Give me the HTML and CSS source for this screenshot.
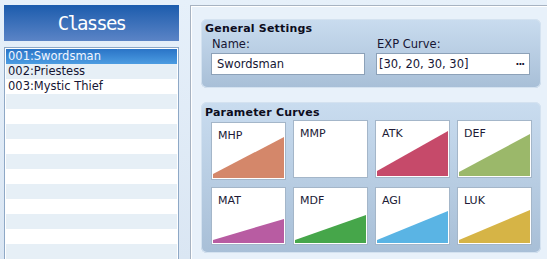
FILE: index.html
```
<!DOCTYPE html>
<html lang="en">

<head>
    <meta charset="UTF-8">
    <meta name="viewport" content="width=device-width, initial-scale=1.0">
    <title>Classes</title>
    <link rel="stylesheet" href="styles.css">
</head>

<body>
    <div class="sidebar">
        <h1 class="sidebar-title">Classes</h1>
        <ul class="class-list">
            <li class="selected">001:Swordsman</li>
            <li>002:Priestess</li>
            <li>003:Mystic Thief</li>
            <li></li>
            <li></li>
            <li></li>
            <li></li>
            <li></li>
            <li></li>
            <li></li>
            <li></li>
            <li></li>
            <li></li>
            <li></li>
        </ul>
    </div>

    <div class="editor">
        <div class="group general">
            <h2>General Settings</h2>
            <div class="fields">
                <div class="field">
                    <label for="name">Name:</label>
                    <div class="input" id="name">Swordsman</div>
                </div>
                <div class="field">
                    <label for="exp">EXP Curve:</label>
                    <div class="input" id="exp">[30, 20, 30, 30]<span class="more">...</span></div>
                </div>
            </div>
        </div>

        <div class="group params">
            <h2>Parameter Curves</h2>
            <div class="curves">
                <div class="curve pressed">
                    <span>MHP</span>
                    <svg viewBox="0 0 71 54" preserveAspectRatio="none"><polygon points="0,50 71,13 71,54 0,54" fill="#d4876a"/></svg>
                </div>
                <div class="curve">
                    <span>MMP</span>
                    <svg viewBox="0 0 71 54" preserveAspectRatio="none"></svg>
                </div>
                <div class="curve">
                    <span>ATK</span>
                    <svg viewBox="0 0 71 54" preserveAspectRatio="none"><polygon points="0,49 71,9 71,54 0,54" fill="#c64a6a"/></svg>
                </div>
                <div class="curve">
                    <span>DEF</span>
                    <svg viewBox="0 0 71 54" preserveAspectRatio="none"><polygon points="0,50 71,12 71,54 0,54" fill="#9bb86a"/></svg>
                </div>
                <div class="curve">
                    <span>MAT</span>
                    <svg viewBox="0 0 71 54" preserveAspectRatio="none"><polygon points="0,51 71,30 71,54 0,54" fill="#b85ca2"/></svg>
                </div>
                <div class="curve">
                    <span>MDF</span>
                    <svg viewBox="0 0 71 54" preserveAspectRatio="none"><polygon points="0,51 71,26 71,54 0,54" fill="#46a64a"/></svg>
                </div>
                <div class="curve">
                    <span>AGI</span>
                    <svg viewBox="0 0 71 54" preserveAspectRatio="none"><polygon points="0,51 71,22 71,54 0,54" fill="#5ab4e4"/></svg>
                </div>
                <div class="curve">
                    <span>LUK</span>
                    <svg viewBox="0 0 71 54" preserveAspectRatio="none"><polygon points="0,51 71,21 71,54 0,54" fill="#d6b446"/></svg>
                </div>
            </div>
        </div>
    </div>
</body>

</html>
```

FILE: styles.css
```
* {
    margin: 0;
    padding: 0;
    box-sizing: border-box;
}

body {
    width: 547px;
    height: 259px;
    overflow: hidden;
    display: flex;
    padding: 5px 0 0 4px;
    background: linear-gradient(#e6f0fa, #dae6f3);
    font-family: "DejaVu Sans", Verdana, sans-serif;
    font-size: 11.5px;
    color: #161634;
}

.sidebar {
    width: 175px;
    display: flex;
    flex-direction: column;
}

.sidebar-title {
    height: 36px;
    background: linear-gradient(#1c5cad, #5b84c6);
    color: #fff;
    font-family: "DejaVu Sans Mono", monospace;
    font-weight: normal;
    font-size: 19px;
    letter-spacing: -1.8px;
    text-align: center;
    line-height: 36px;
}

.class-list {
    list-style: none;
    margin-top: 6px;
    flex: 1;
    border: 1px solid #8ea8c6;
    border-bottom: none;
    padding: 1px 1px 0;
    background: #fff;
}

.class-list li {
    height: 15px;
    line-height: 15px;
    padding-left: 2px;
    white-space: nowrap;
}

.class-list li:nth-child(even) {
    background: #e6eff6;
}

.class-list li.selected {
    background: linear-gradient(#2a74c7, #4c9ce1);
    color: #f2f6ff;
}

.editor {
    flex: 1;
    margin-left: 11px;
    border-top: 1px solid #a7b3c2;
    border-left: 1px solid #a7b3c2;
    box-shadow: inset 1px 1px 0 #fff;
    background: #e8f1fa;
    padding: 13px 5px 0 10px;
}

.group {
    width: 340px;
    border-radius: 6px;
    background: linear-gradient(#c9dcef, #a8bfd7);
    box-shadow: inset 0 0 0 1px #d4e2f0;
}

.group h2 {
    font-size: 11px;
    font-weight: bold;
    letter-spacing: 0.2px;
    color: #0c0c1c;
    padding: 3px 0 0 4px;
    line-height: 13px;
}

.general {
    height: 69px;
}

.fields {
    display: flex;
    gap: 11px;
    padding: 2px 0 0 10px;
}

.field label {
    display: block;
    padding-left: 1px;
    line-height: 14px;
}

.input {
    margin-top: 2px;
    width: 154px;
    height: 22px;
    border: 1px solid #8ca1b8;
    background: #fff;
    padding-left: 5px;
    line-height: 20px;
    display: flex;
    justify-content: space-between;
}

#exp {
    padding-left: 2px;
}

.more {
    font-weight: bold;
    font-size: 10px;
    letter-spacing: -1px;
    padding-right: 5px;
    line-height: 16px;
}

.params {
    margin-top: 14px;
    height: 151px;
}

.params h2 {
    padding-top: 4px;
}

.curves {
    display: grid;
    grid-template-columns: repeat(4, 75px);
    grid-auto-rows: 58px;
    column-gap: 7px;
    row-gap: 9px;
    padding: 1px 0 0 10px;
    align-items: start;
}

.curve {
    height: 58px;
    border: 1px solid #a4b6c9;
    background: #fff;
    padding: 1px;
    display: grid;
}

.curve.pressed {
    margin-top: 2px;
}

.curve span,
.curve svg {
    grid-area: 1 / 1;
}

.curve svg {
    width: 71px;
    height: 54px;
    display: block;
}

.curve span {
    position: relative;
    z-index: 1;
    font-size: 11px;
    padding: 5px 0 0 5px;
    color: #201a36;
}
```
